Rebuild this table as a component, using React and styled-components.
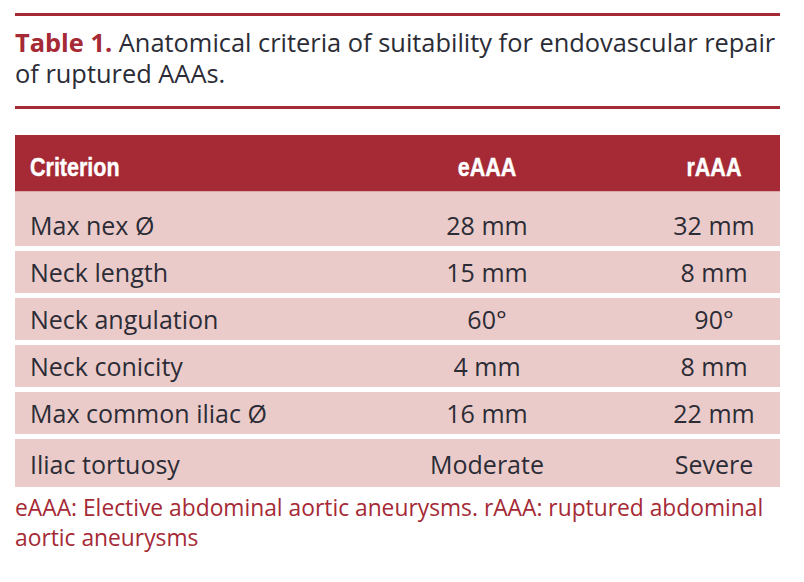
import React from "react";
import styled, { createGlobalStyle } from "styled-components";

const Global = createGlobalStyle`
  html, body { margin: 0; padding: 0; background: #fff; }
  body { font-family: "Open Sans", "Noto Sans", sans-serif; }
`;

const RED = "#a52a35";
const ROW = "#ebcbc9";
const INK = "#2b2c36";

const Page = styled.div`
  width: 765px;
  padding: 13px 24px 0 15px;
`;

const Rule = styled.div`
  height: 3px;
  background: ${RED};
`;

const Caption = styled.p`
  margin: 11px 0 17px;
  font-size: 25.4px;
  line-height: 31px;
  color: ${INK};
`;

const Label = styled.span`
  color: ${RED};
  font-weight: 700;
`;

const Table = styled.div`
  margin-top: 26px;
  display: flex;
  flex-direction: column;
`;

const Grid = styled.div`
  display: grid;
  grid-template-columns: 311px 322px 132px;
  align-items: center;
`;

const HeadRow = styled(Grid)`
  height: 57px;
  padding-top: 8px;
  box-sizing: border-box;
  background: ${RED};
  color: #fff;
  font-family: "Liberation Sans", Arial, sans-serif;
  font-weight: 700;
  font-size: 25px;
  border-bottom: 1px solid #d9a8ab;
`;

const HeadText = styled.span`
  display: inline-block;
  transform: scaleX(0.86);
  transform-origin: ${(p) => (p.$left ? "left center" : "center center")};
  -webkit-text-stroke: 0.4px #fff;
`;

const BodyRow = styled(Grid)`
  height: ${(p) => p.$h}px;
  padding-top: ${(p) => p.$pt || 0}px;
  box-sizing: border-box;
  background: ${ROW};
  color: ${INK};
  font-size: 25px;
`;

const Cell = styled.div`
  padding-left: ${(p) => (p.$left ? "15px" : "0")};
  text-align: ${(p) => (p.$left ? "left" : "center")};
  white-space: nowrap;
`;

const Rows = styled.div`
  display: flex;
  flex-direction: column;
  gap: 5px;
`;

const Note = styled.p`
  margin: 6px 0 0;
  font-size: 22.8px;
  line-height: 30px;
  color: ${RED};
  padding-right: 8px;
`;

const data = [
  ["Max nex Ø", "28 mm", "32 mm", 54, 12],
  ["Neck length", "15 mm", "8 mm", 42],
  ["Neck angulation", "60°", "90°", 42],
  ["Neck conicity", "4 mm", "8 mm", 42],
  ["Max common iliac Ø", "16 mm", "22 mm", 42],
  ["Iliac tortuosy", "Moderate", "Severe", 48, 2],
];

export default function App() {
  return (
    <>
      <Global />
      <Page>
        <Rule />
        <Caption>
          <Label>Table 1.</Label> Anatomical criteria of suitability for endovascular repair of ruptured AAAs.
        </Caption>
        <Rule />
        <Table>
          <HeadRow>
            <Cell $left><HeadText $left>Criterion</HeadText></Cell>
            <Cell><HeadText>eAAA</HeadText></Cell>
            <Cell><HeadText>rAAA</HeadText></Cell>
          </HeadRow>
          <Rows>
            {data.map(([a, b, c, h, pt]) => (
              <BodyRow key={a} $h={h} $pt={pt}>
                <Cell $left>{a}</Cell>
                <Cell>{b}</Cell>
                <Cell>{c}</Cell>
              </BodyRow>
            ))}
          </Rows>
        </Table>
        <Note>
          eAAA: Elective abdominal aortic aneurysms. rAAA: ruptured abdominal aortic aneurysms
        </Note>
      </Page>
    </>
  );
}
